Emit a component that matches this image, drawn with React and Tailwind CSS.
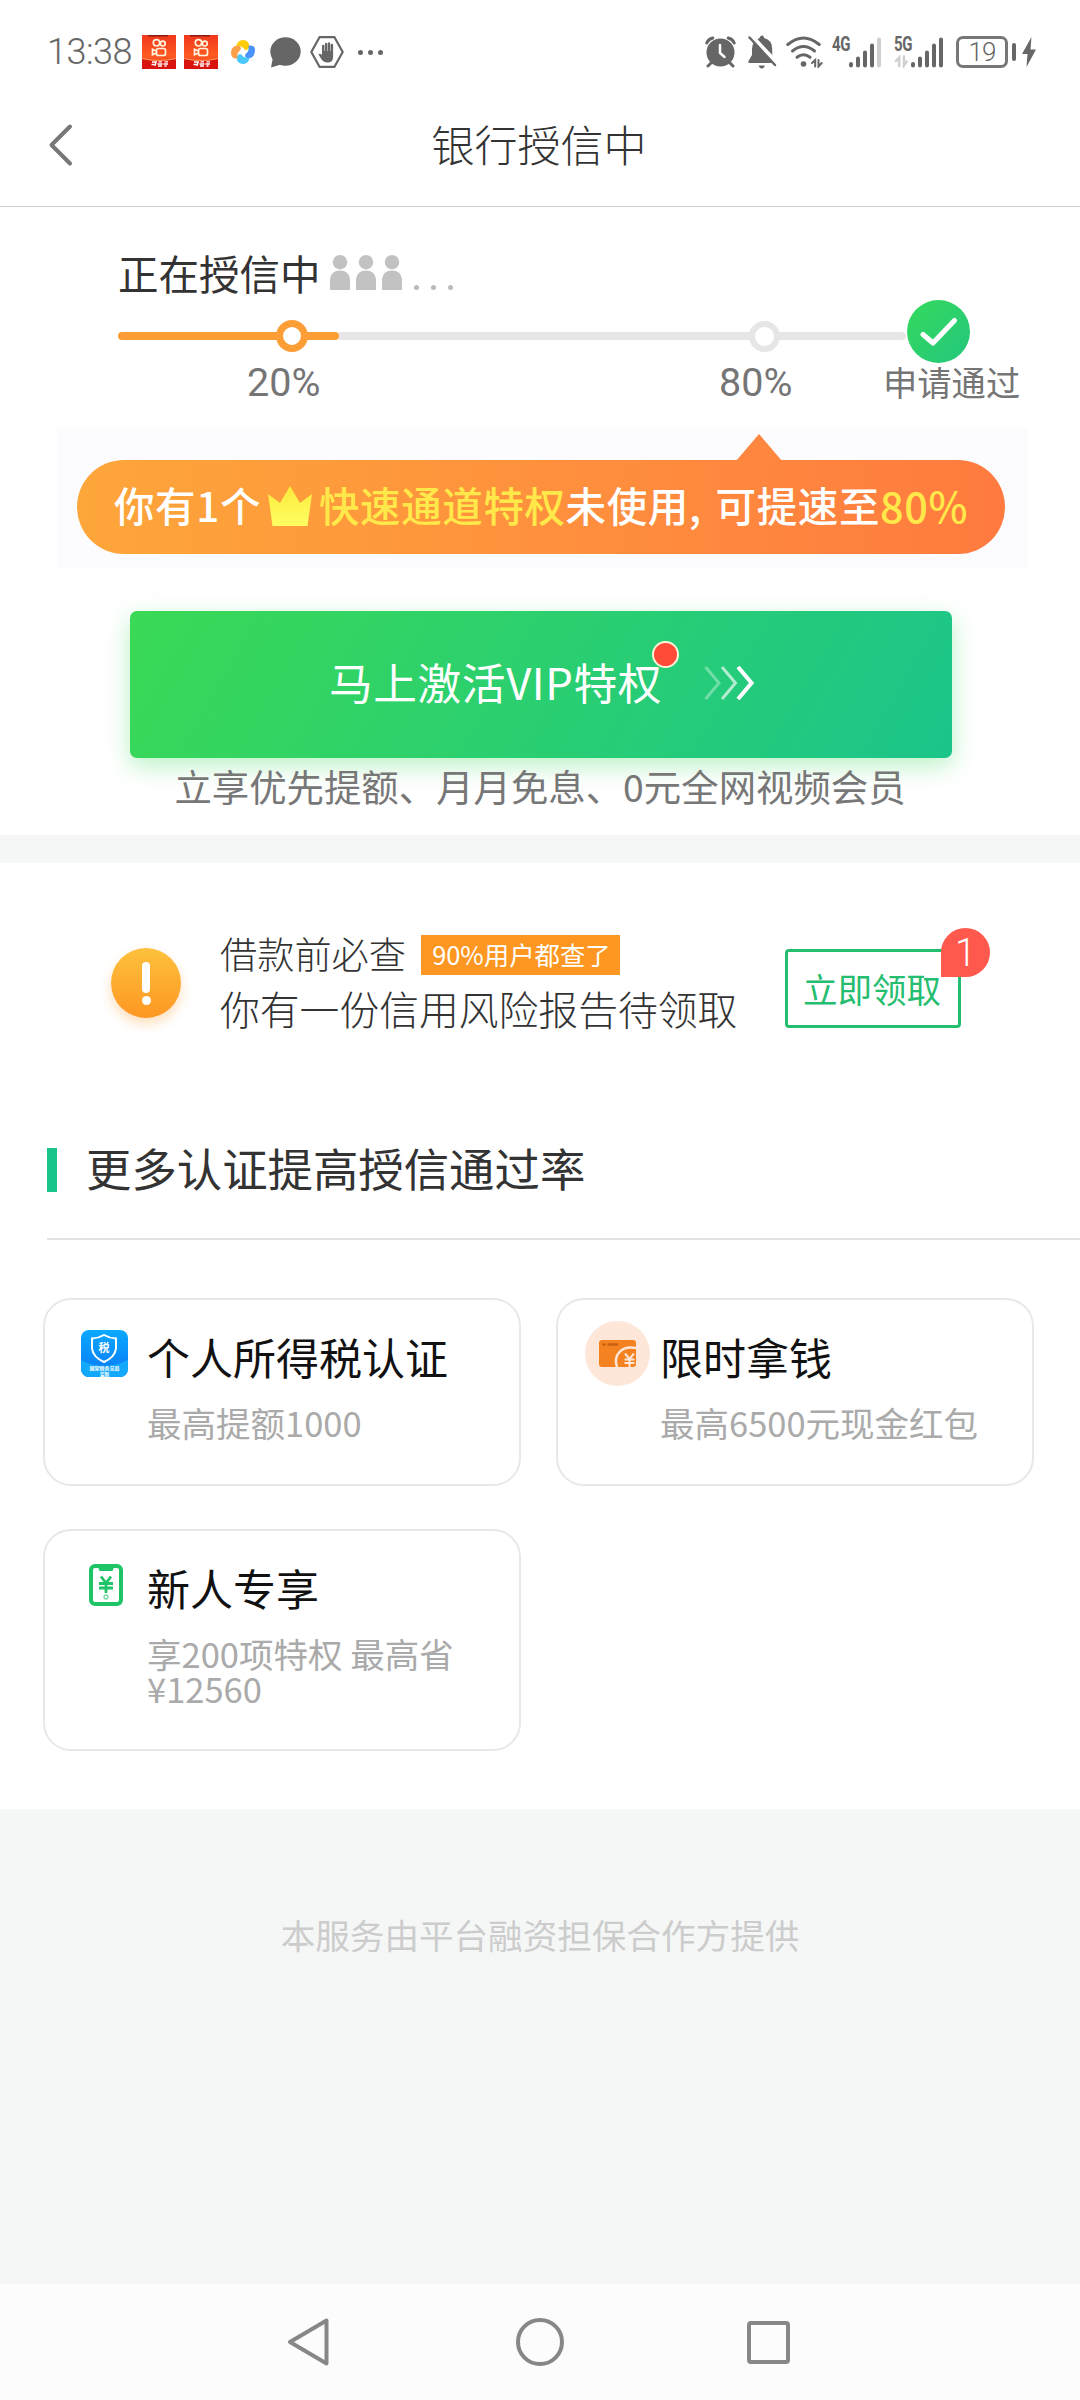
// Status bar icons
const KwaiIcon = () => (
  <svg className="w-[34px] h-[34px]" viewBox="0 0 34 34">
    <defs>
      <linearGradient id="kwai" x1="0" y1="0" x2="0" y2="1">
        <stop offset="0" stopColor="#f0381c" />
        <stop offset="0.6" stopColor="#ff5a22" />
        <stop offset="1" stopColor="#f23a1e" />
      </linearGradient>
    </defs>
    <rect width="34" height="34" fill="url(#kwai)" />
    <path d="M6 0h20v1.5H6z" fill="#8a1c10" />
    <path d="M0 24q17 4 34 0v10H0z" fill="#d9140f" />
    <path d="M0 23.500q17 4 34 0" fill="none" stroke="#ff9a5a" strokeWidth="1" />
    <g fill="none" stroke="#fff3dc" strokeWidth="1.7">
      <circle cx="14.5" cy="7.800" r="3.200" />
      <circle cx="20.8" cy="8.600" r="2.400" />
      <rect x="14.500" y="13.500" width="9" height="7" rx="2" />
      <path d="M14.500 16l-4-1.800v5.600l4-1.800" />
    </g>
    <path d="M10 27h5M9.500 29.500h4.500M14 27l-1 4M16.500 26.800h3.500M15.500 29h5M16 31h4M22.500 26.800h3.500M21.500 29h4.500M22.500 31h2" stroke="#fff" strokeWidth="1.300" />
  </svg>
);

const PinwheelIcon = () => (
  <svg className="w-6 h-6" viewBox="0 0 24 24">
    <path d="M5.500 6.500Q6 0 12 0t6.500 6.500Q17 11 13.500 9.500 11 5.500 5.500 6.500z" fill="#ffcd0a" />
    <path d="M17.500 5.500Q24 5 24 9.500 24 18 17.500 18.500 13 18 14.500 14q4-2.500 3-8.500z" fill="#4a93fa" />
    <path d="M18.500 17.500Q18 24 12 24t-6.500-6.500Q7 13 10.500 14.500q2.500 4 8 3z" fill="#4bc8fb" />
    <path d="M6.500 18.500Q0 19 0 13 0 6 6.500 5.500 11 6 9.500 10q-4 2.500-3 8.500z" fill="#fba14a" />
  </svg>
);

const ChatIcon = () => (
  <svg className="w-[31px] h-[31px]" viewBox="0 0 31 31" fill="#666">
    <ellipse cx="15.500" cy="14.500" rx="15.200" ry="14.300" />
    <path d="M3 20L1 30.500l10-3z" />
  </svg>
);

const HexHandIcon = () => (
  <div className="relative w-[34px] h-8 flex items-center justify-center">
    <svg className="absolute inset-0 w-[34px] h-8" viewBox="0 0 34 32" fill="none" stroke="#666" strokeWidth="2.200" strokeLinejoin="round">
      <path d="M9.500 1.200h15L32.700 16l-8.200 14.800h-15L1.300 16z" />
    </svg>
    <svg className="w-[18px] h-[21px]" viewBox="0 0 18 21" fill="#666">
      <path d="M4 12V4a1.200 1.200 0 0 1 2.400 0v5h.5V2a1.200 1.200 0 0 1 2.400 0v7h.5V1.500a1.200 1.200 0 0 1 2.400 0V9h.5V3a1.200 1.200 0 0 1 2.400 0v12q0 5.500-5.500 5.500-4 0-6-3L.5 12.500q1.200-1.600 3.500.5z" />
    </svg>
  </div>
);

const AlarmIcon = () => (
  <svg className="w-[31px] h-8" viewBox="0 0 31 32">
    <g fill="none" stroke="#666" strokeWidth="3" strokeLinecap="round">
      <path d="M1.800 7q1.500-4 6-5M29.200 7q-1.500-4-6-5" />
      <path d="M6 27l-3 3M25 27l3 3" />
    </g>
    <circle cx="15.500" cy="16.500" r="14" fill="#666" />
    <path d="M15 9v8l4.500 4" fill="none" stroke="#fff" strokeWidth="2.500" strokeLinecap="round" />
  </svg>
);

const MutedBellIcon = () => (
  <svg className="w-[30px] h-[34px]" viewBox="0 0 30 34">
    <path d="M15 .5q2 0 2.200 2.500 8 2 8 11v6l3.500 6v2H1.500v-2l3.500-6v-6q0-8 7.500-11Q13 .5 15 .5z" fill="#666" />
    <path d="M11.500 30.500h6.500q-1 3-3.200 3t-3.300-3z" fill="#666" />
    <path d="M4 .5l27 29" stroke="#fff" strokeWidth="4.500" />
    <path d="M1 0h9L5 8z" fill="#fff" />
    <path d="M2.500 2.500L28 30" stroke="#666" strokeWidth="2.400" strokeLinecap="round" />
  </svg>
);

const WifiIcon = () => (
  <svg className="w-[37px] h-8" viewBox="0 0 37 32" fill="none" stroke="#666" strokeWidth="3" strokeLinecap="round">
    <path d="M1.800 8.500q15.700-13 31.400 0" />
    <path d="M6.500 15q11-9 22 0" />
    <path d="M11 21.300q6.500-5 13 0" />
    <circle cx="17.500" cy="28" r="2.800" fill="#666" stroke="none" />
    <path d="M26 27l3.200-3v6.500M32.500 24v6.500l3.200-3.500" strokeWidth="2" />
  </svg>
);

const SignalIcon = ({ label, weak, arrows }) => (
  <div className="relative w-[50px] h-8">
    <span className="absolute left-0 -top-[2px] font-['Roboto'] font-bold text-[20px] leading-[20px] tracking-[-0.500px] text-[#666] origin-left scale-x-75">
      {label}
    </span>
    <svg className="absolute inset-0 w-[50px] h-8" viewBox="0 0 50 32" strokeLinecap="round" strokeWidth="4" stroke="#666" fill="none">
      <path d="M19 28v1.500M26 22.500v7M33 16.500v13M40 9.500v20" />
      <path d="M47 3.500v26" stroke={weak ? "#cfcfcf" : "#666"} />
      {arrows && <path d="M2 25l3.200-3.500v8.500M10 20.500v9l2.700-4" stroke="#cfcfcf" strokeWidth="2.500" />}
    </svg>
  </div>
);

const Battery = () => (
  <div className="flex items-center gap-[4px] w-[60px]">
    <div className="w-[52px] h-8 border-3 border-[#777] rounded-[7px] flex items-center justify-center">
      <span className="font-['Roboto'] font-light text-[26px] leading-[28px] tracking-[-1px] text-[#666]">19</span>
    </div>
    <div className="w-1 h-[18px] rounded-sm bg-[#666]" />
  </div>
);

const BoltIcon = () => (
  <svg className="w-[14px] h-[30px]" viewBox="0 0 14 30" fill="#666">
    <path d="M9.500 0L0 17h5.500L4.500 30 14 12.500H8.500z" />
  </svg>
);

const StatusBar = () => (
  <div className="h-[104px] flex items-center justify-between pl-[47px] pr-11">
    <div className="flex items-center">
      <span className="w-[95px] font-['Roboto'] font-light text-[36px] leading-9 tracking-[-0.500px] text-[#666]">13:38</span>
      <KwaiIcon />
      <div className="w-2" />
      <KwaiIcon />
      <div className="ml-[13px] mr-[15px]"><PinwheelIcon /></div>
      <ChatIcon />
      <div className="ml-[9px] mr-[14px]"><HexHandIcon /></div>
      <div className="flex gap-[5px]">
        <i className="size-[5px] rounded-full bg-[#666]" />
        <i className="size-[5px] rounded-full bg-[#666]" />
        <i className="size-[5px] rounded-full bg-[#666]" />
      </div>
    </div>
    <div className="flex items-center">
      <AlarmIcon />
      <div className="ml-[11px] mr-[9px]"><MutedBellIcon /></div>
      <WifiIcon />
      <div className="ml-[9px] mr-3"><SignalIcon label="4G" weak /></div>
      <SignalIcon label="5G" arrows />
      <div className="ml-3 mr-[6px]"><Battery /></div>
      <BoltIcon />
    </div>
  </div>
);

const TitleBar = () => (
  <div className="h-[103px] pb-[21px] border-b border-[#cfcfcf] grid grid-cols-[200px_1fr_200px] items-center">
    <svg className="ml-[48px] w-[26px] h-[44px]" viewBox="0 0 26 44" fill="none" stroke="#777" strokeWidth="4" strokeLinecap="round" strokeLinejoin="round">
      <path d="M22 3.500L3.500 22 22 40.500" />
    </svg>
    <h1 className="text-center font-light text-[43px] leading-[50px] -mt-[3px] -ml-[2px] text-[#333]">银行授信中</h1>
  </div>
);

const PersonIcon = () => (
  <svg className="w-5 h-[35px]" viewBox="0 0 20 35" fill="#c2c2c2">
    <circle cx="10" cy="7.200" r="7.200" />
    <path d="M0 35V24Q1 15.500 10 15.500T20 24v11z" />
  </svg>
);

const Progress = () => (
  <>
    <div className="flex items-center h-10 pl-[118px]">
      <span className="w-[212px] mt-[2px] text-[40.500px] leading-10 text-[#333]">正在授信中</span>
      <div className="flex gap-[6px] mt-[1px]">
        <PersonIcon />
        <PersonIcon />
        <PersonIcon />
      </div>
      <div className="flex gap-[12px] ml-3 mt-[30px]">
        <i className="size-[5px] rounded-full bg-[#bbb]" />
        <i className="size-[5px] rounded-full bg-[#bbb]" />
        <i className="size-[5px] rounded-full bg-[#bbb]" />
      </div>
    </div>

    <div className="flex items-center h-[63px] mt-2 pt-[9px] ml-[118px]">
      <div className="w-[159px] h-2 bg-[#fc9d35] rounded-l-full" />
      <div className="size-8 -mx-px rounded-full border-[7px] border-[#fc9d35] bg-white" />
      <div className="w-[32px] h-2 bg-[#fc9d35] rounded-r-full" />
      <div className="w-[411px] h-2 bg-[#e6e6e6]" />
      <div className="size-[31px] -mx-px rounded-full border-[6px] border-[#e6e6e6] bg-white" />
      <div className="w-[127px] h-2 bg-[#e6e6e6] rounded-r-full" />
      <div className="size-[63px] -mt-[9px] ml-px rounded-full bg-linear-to-br from-[#35d95a] to-[#23c77c] flex items-center justify-center">
        <svg className="w-[38px] h-[30px]" viewBox="0 0 38 30" fill="none" stroke="#fff" strokeWidth="5" strokeLinecap="round" strokeLinejoin="round">
          <path d="M3 17.500l10 8.500L34.500 3.500" />
        </svg>
      </div>
    </div>

    <div className="flex h-10 leading-10 text-[#757575] pl-[247px]">
      <span className="w-[472px] font-['Roboto'] text-[39.500px]">20%</span>
      <span className="w-[164px] font-['Roboto'] text-[39.500px]">80%</span>
      <span className="text-[34.300px] -mt-[2px]">申请通过</span>
    </div>
  </>
);

const CrownIcon = () => (
  <svg className="w-11 h-10 ml-[7px] mr-[7px]" viewBox="0 0 44 40">
    <defs>
      <linearGradient id="crown" x1="0" y1="0" x2="0" y2="1">
        <stop offset="0" stopColor="#fbe93c" />
        <stop offset="1" stopColor="#ffff62" />
      </linearGradient>
    </defs>
    <path d="M0 8l12 9L22 0l10 17 12-9-4.500 32h-35z" fill="url(#crown)" />
  </svg>
);

const PrivilegeBanner = () => (
  <div className="mt-[25px] ml-[57px] w-[971px] h-[140px] pt-8 pl-5 bg-[#fcfcfe]">
    <div className="relative w-[928px] h-[94px] pl-[37px] pb-[3px] rounded-full bg-linear-to-r from-[#fda63a] to-[#ff7a3f] flex items-center whitespace-nowrap font-medium text-[40.500px] tracking-[0.600px] text-white">
      <svg className="absolute left-[659px] -top-[26px] w-[46px] h-[27px]" viewBox="0 0 46 27" fill="#ff863e">
        <path d="M0 27L23 0l23 27z" />
      </svg>
      <span>你有1个</span>
      <CrownIcon />
      <span className="text-[#ffe94a]">快速通道特权</span>
      <span className="w-[150px]">未使用,</span>
      <span>可提速至</span>
      <span className="text-[#ffe94a] text-[41.500px]">80%</span>
    </div>
  </div>
);

const VipButton = () => (
  <button className="mt-[43px] ml-[130px] w-[822px] h-[147px] rounded-[7px] bg-linear-[120deg] from-[#3ad956] to-[#1bc58a] shadow-[0_8px_24px_rgba(58,217,90,0.35)] flex items-center pl-[199px] pb-2 text-white">
    <span className="relative text-[43.700px] leading-[50px] tracking-[0.600px]">
      马上激活VIP特权
      <i className="absolute -right-[17px] -top-[15px] size-[27px] rounded-full border-2 border-[#fff3d8] bg-[#ff4b37]" />
    </span>
    <svg className="ml-[42px] mt-1 w-[50px] h-[34px]" viewBox="0 0 50 34" fill="none" stroke="#fff" strokeWidth="3">
      <path d="M1.500 1l13.500 16L1.500 33" opacity="0.350" />
      <path d="M18 1l13.500 16L18 33" opacity="0.650" />
      <path d="M34 1l13.500 16L34 33" strokeWidth="4" />
    </svg>
  </button>
);

const ReportRow = () => (
  <div className="flex h-[108px] mt-[65px] pl-[111px]">
    <div className="mt-5 size-[70px] rounded-full bg-linear-to-b from-[#fdc13c] to-[#fd9622] shadow-[0_6px_12px_rgba(253,150,34,0.3)] flex flex-col items-center justify-center gap-[3px]">
      <div className="w-2 h-[31px] rounded-full bg-white" />
      <div className="size-[9px] rounded-full bg-white" />
    </div>
    <div className="ml-[39px] w-[565px] font-light text-[#333]">
      <div className="flex items-center h-[50px]">
        <span className="text-[37.200px] leading-[50px]">借款前必查</span>
        <span className="ml-[15px] mt-[4px] w-[199px] h-10 bg-[#fd9722] text-center text-white font-normal text-[25.400px] leading-[38px] pl-[2px]">90%用户都查了</span>
      </div>
      <p className="mt-px text-[39.800px] leading-[58px] whitespace-nowrap">你有一份信用风险报告待领取</p>
    </div>
    <div className="relative mt-[21px] w-[176px] h-[79px] border-3 border-[#25bd70] rounded-[4px] text-center text-[34.500px] leading-[72px] pr-[2px] text-[#25bd70]">
      立即领取
      <span className="absolute -right-[32px] -top-[24px] size-[49px] rounded-full rounded-bl-[3px] bg-[#ff584c] text-center font-['Roboto'] text-[38px] leading-[50px] font-light text-white">1</span>
    </div>
  </div>
);

// Certification card icons
const TaxIcon = () => (
  <svg className="w-[47px] h-[47px]" viewBox="0 0 47 47" fontFamily="Noto Sans CJK SC" fill="#fff" textAnchor="middle">
    <defs>
      <linearGradient id="tax" x1="0" y1="0" x2="0" y2="1">
        <stop offset="0" stopColor="#0ba9ff" />
        <stop offset="1" stopColor="#0a78f5" />
      </linearGradient>
    </defs>
    <rect width="47" height="47" rx="8" fill="url(#tax)" />
    <path d="M0 30q12 6 23 6t24-6v9a8 8 0 0 1-8 8H8a8 8 0 0 1-8-8z" fill="#12a8fb" />
    <path d="M23 5q5 3 12 3.500v10Q34 27 23 32 12 27 11 18.500v-10Q18 8 23 5z" fill="none" stroke="#fff" strokeWidth="2" />
    <text x="23" y="21.500" fontSize="11" fontWeight="700">税</text>
    <text x="23.500" y="40" fontSize="5" fontWeight="700">国家税务总局</text>
    <text x="23.500" y="45.500" fontSize="4.500" fontWeight="700">监制</text>
  </svg>
);

const WalletIcon = () => (
  <svg className="w-[65px] h-[65px]" viewBox="0 0 65 65">
    <circle cx="32.500" cy="32.500" r="32.500" fill="#fee6d8" />
    <rect x="14" y="19" width="37" height="27" rx="3" fill="#f58220" />
    <circle cx="19" cy="23.500" r="1.600" fill="#c9620f" />
    <path d="M23.500 23.500h8.500" stroke="#c9620f" strokeWidth="2.500" strokeLinecap="round" />
    <path d="M32 46q-3-9 2.500-15t16.500-4" fill="none" stroke="#fee6d8" strokeWidth="2.500" />
    <path d="M40 32.500l4.500 5.500 4.500-5.500M44.500 38v8M39.500 38.500h10M39.500 42h10" fill="none" stroke="#fee6d8" strokeWidth="2" />
  </svg>
);

const PhoneYuanIcon = () => (
  <svg className="w-[34px] h-[42px]" viewBox="0 0 34 42" fill="none" stroke="#1fc466">
    <rect x="2" y="2" width="30" height="38" rx="4" strokeWidth="4" />
    <path d="M8.500 2h17l-2 5h-13z" fill="#1fc466" stroke="none" />
    <path d="M12 12.500l5 6.500 5-6.500M17 19v10M10 19.500h14M10 24h14" strokeWidth="2.800" />
    <circle cx="17" cy="33" r="2" strokeWidth="1.400" opacity="0.600" />
  </svg>
);

const cards = [
  { icon: <TaxIcon />, iconClass: "ml-[36px] mt-[30px]", title: "个人所得税认证", desc: "最高提额1000" },
  { icon: <WalletIcon />, iconClass: "ml-[27px] mt-[21px]", title: "限时拿钱", desc: "最高6500元现金红包" },
  { icon: <PhoneYuanIcon />, iconClass: "ml-[44px] mt-[33px]", title: "新人专享", desc: "享200项特权 最高省¥12560" },
];

const Card = ({ icon, iconClass, title, desc }) => (
  <div className="flex border-2 border-[#e8e8e8] rounded-[28px]">
    <div className="w-[102px] shrink-0">
      <div className={iconClass}>{icon}</div>
    </div>
    <div className="pt-[32px] w-[330px]">
      <h3 className="text-[43px] leading-[48px] text-[#111]">{title}</h3>
      <p className="mt-[25px] text-[34.500px] leading-[34.500px] text-[#aaa]">{desc}</p>
    </div>
  </div>
);

const NavBar = () => (
  <div className="h-[116px] bg-[#fcfcfc] flex items-center pl-[287px]">
    <svg className="w-[43px] h-[50px]" viewBox="0 0 43 50" fill="none" stroke="#878787" strokeWidth="4" strokeLinejoin="round">
      <path d="M39.500 3.500v43L3 25z" />
    </svg>
    <div className="ml-[186px] size-[48px] rounded-full border-4 border-[#878787]" />
    <div className="ml-[183px] size-[43px] rounded-[4px] border-4 border-[#878787]" />
  </div>
);

const App = () => {
  return (
    <div className="w-[1080px] h-[2400px] flex flex-col overflow-hidden bg-[#f5f7f6] font-['Noto_Sans_CJK_SC',sans-serif]">
      <div className="bg-white">
        <StatusBar />
        <TitleBar />
      </div>

      {/* Credit progress and VIP */}
      <div className="h-[628px] pt-[45px] bg-white">
        <Progress />
        <PrivilegeBanner />
        <VipButton />
        <p className="mt-2 text-center text-[37.400px] leading-10 text-[#777]">
          立享优先提额、月月免息、0元全网视频会员
        </p>
      </div>

      {/* Report and certifications */}
      <div className="mt-7 h-[946px] bg-white flow-root">
        <ReportRow />
        <div className="ml-[47px] mt-[92px] h-[112px] border-b-2 border-[#e2e2e2] flex items-start pt-[20px]">
          <div className="w-[10px] h-[44px] bg-[#19c58a]" />
          <h2 className="ml-[29px] -mt-[6px] text-[45.400px] leading-[50px] text-[#333]">更多认证提高授信通过率</h2>
        </div>
        <div className="mt-[58px] ml-[43px] grid grid-cols-[478px_478px] grid-rows-[188px_222px] gap-x-[35px] gap-y-[43px]">
          {cards.map((card) => (
            <Card key={card.title} {...card} />
          ))}
        </div>
      </div>

      <p className="flex-1 pt-[104px] text-center text-[34.600px] leading-[42px] text-[#ccc]">
        本服务由平台融资担保合作方提供
      </p>
      <NavBar />
    </div>
  );
};

export default App;
